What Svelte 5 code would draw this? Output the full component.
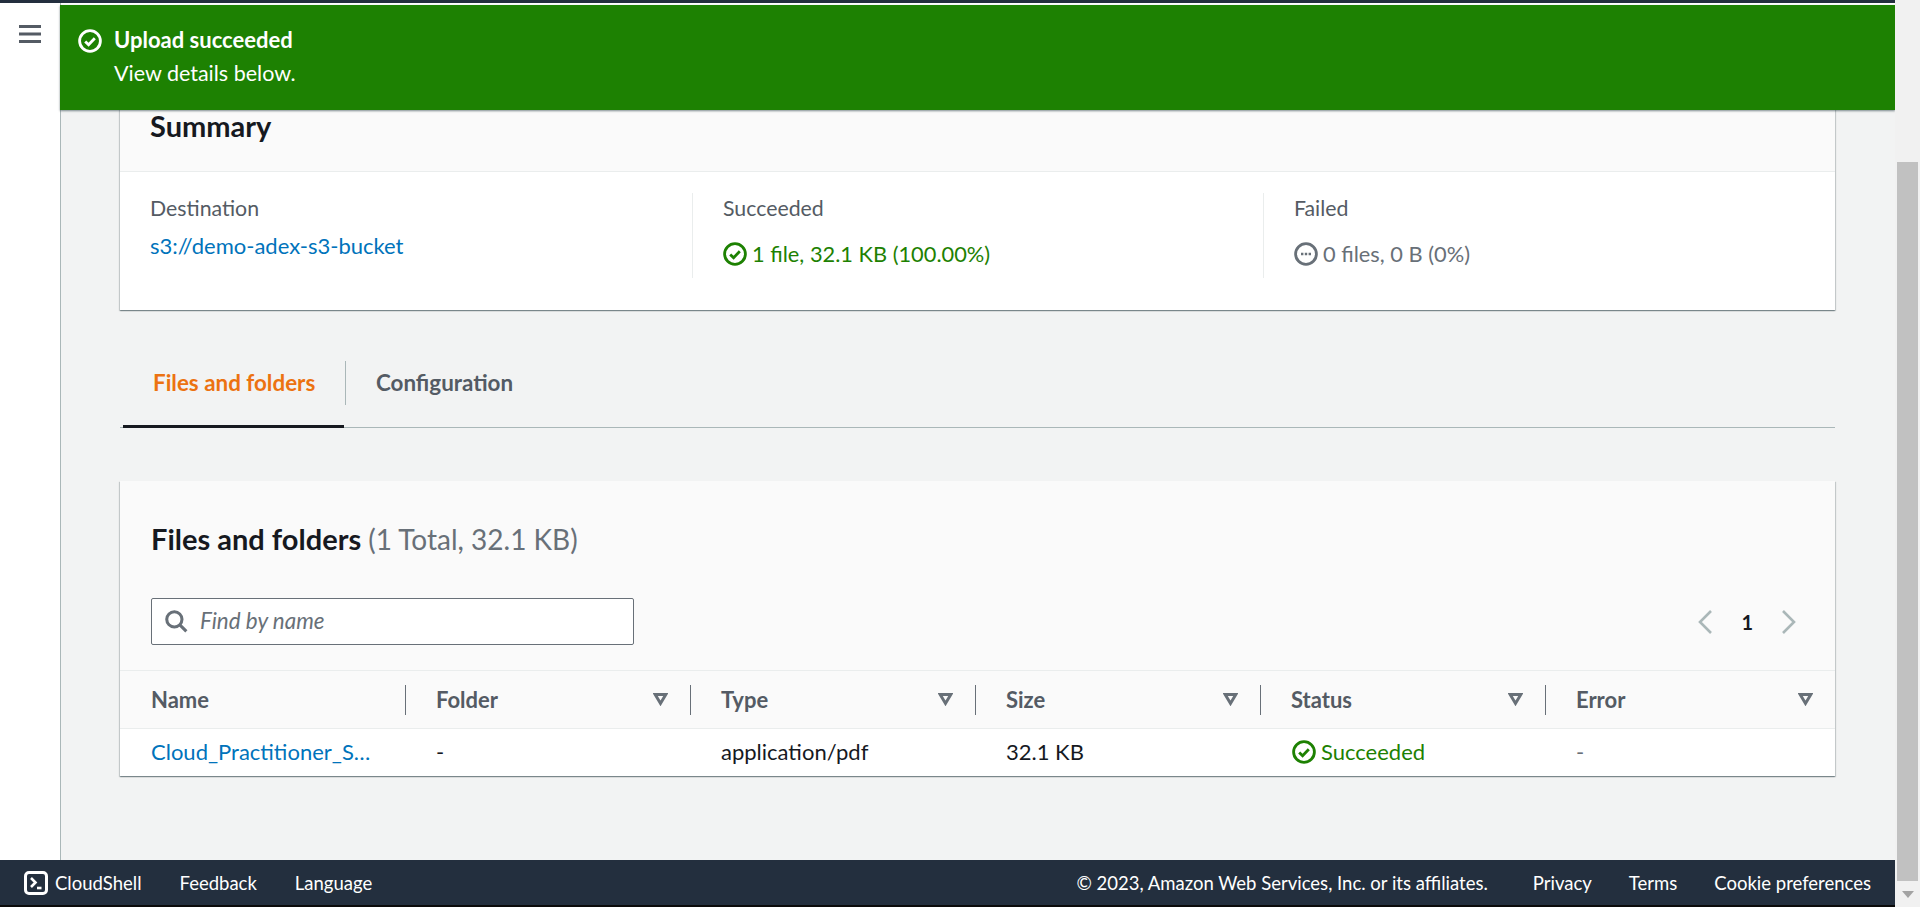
<script>
  const columns = [
    { name: 'Name', value: 'Cloud_Practitioner_S…', link: true, filter: false },
    { name: 'Folder', value: '-', filter: true },
    { name: 'Type', value: 'application/pdf', filter: true },
    { name: 'Size', value: '32.1 KB', filter: true },
    { name: 'Status', value: 'Succeeded', ok: true, filter: true },
    { name: 'Error', value: '-', muted: true, filter: true }
  ];
</script>

{#snippet check(size, cls)}
  <svg class={cls} width={size} height={size} viewBox="0 0 24 24" fill="none" stroke="currentColor" aria-hidden="true">
    <circle cx="12" cy="12" r="10.4" stroke-width="2.8" />
    <path d="M7.2 12.4l3.4 3.4 6.2-6.6" stroke-width="2.8" />
  </svg>
{/snippet}

<div class="page">
  <div class="topbar"></div>
  <div class="body">
    <aside class="side">
      <svg class="burger" width="22" height="18" viewBox="0 0 22 18" aria-hidden="true"><path d="M0 1.5h22M0 9h22M0 16.5h22" stroke="#545b64" stroke-width="3" /></svg>
    </aside>
    <main class="main">
      <div class="banner">
        {@render check(24, 'bannericon')}
        <div>
          <div class="bt">Upload succeeded</div>
          <div class="bd">View details below.</div>
        </div>
      </div>

      <section class="card summary">
        <header class="sumhead"><h2>Summary</h2></header>
        <div class="sumcols">
          <div class="sumcol">
            <div class="lbl">Destination</div>
            <a class="link dest" href="#top">s3://demo-adex-s3-bucket</a>
          </div>
          <div class="sumcol div">
            <div class="lbl">Succeeded</div>
            <div class="val ok">{@render check(24, 'vi')}<span>1 file, 32.1 KB (100.00%)</span></div>
          </div>
          <div class="sumcol div">
            <div class="lbl">Failed</div>
            <div class="val gray">
              <svg class="vi" width="24" height="24" viewBox="0 0 24 24" fill="none" stroke="currentColor" aria-hidden="true">
                <circle cx="12" cy="12" r="10.4" stroke-width="2.8" />
                <path d="M7 12h2.4M10.8 12h2.4M14.6 12h2.4" stroke-width="2.6" />
              </svg>
              <span>0 files, 0 B (0%)</span>
            </div>
          </div>
        </div>
      </section>

      <nav class="tabs">
        <div class="tab active"><span>Files and folders</span></div>
        <div class="tab"><span class="sep">Configuration</span></div>
      </nav>

      <section class="card files">
        <div class="fhead">
          <h2>Files and folders <span class="count">(1 Total, 32.1 KB)</span></h2>
          <div class="tools">
            <div class="search">
              <svg width="24" height="24" viewBox="0 0 22 22" fill="none" stroke="#687078" stroke-width="2.8" aria-hidden="true"><circle cx="9.5" cy="9.5" r="7" /><path d="M14.5 14.5l6 6" /></svg>
              <span>Find by name</span>
            </div>
            <div class="pager">
              <svg width="16" height="26" viewBox="0 0 16 26" fill="none" stroke="#aab7b8" stroke-width="2.6" aria-hidden="true"><path d="M14 2L3 13l11 11" /></svg>
              <span>1</span>
              <svg width="16" height="26" viewBox="0 0 16 26" fill="none" stroke="#aab7b8" stroke-width="2.6" aria-hidden="true"><path d="M2 2l11 11L2 24" /></svg>
            </div>
          </div>
        </div>
        <div class="table">
          {#each columns as c, i}
            <div class="th" class:first={i === 0}>
              <span>{c.name}</span>
              {#if c.filter}
                <svg width="15" height="13" viewBox="0 0 15 13" fill="none" stroke="#687078" stroke-width="3" aria-hidden="true"><path d="M2.2 1.6h10.6L7.5 10.4z" /></svg>
              {/if}
            </div>
          {/each}
          {#each columns as c}
            <div class="td" class:muted={c.muted}>
              {#if c.link}
                <a class="link" href="#top">{c.value}</a>
              {:else if c.ok}
                <span class="ok stat">{@render check(24, 'vi')}<span>{c.value}</span></span>
              {:else}
                {c.value}
              {/if}
            </div>
          {/each}
        </div>
      </section>
    </main>
    <div class="scroll">
      <div class="thumb"></div>
      <div class="arrow"></div>
    </div>
  </div>
  <footer class="footer">
    <div class="fl">
      <span class="shell">
        <svg width="24" height="24" viewBox="0 0 24 24" fill="none" stroke="#fff" aria-hidden="true">
          <rect x="1.5" y="1.5" width="21" height="21" rx="3.5" stroke-width="3" />
          <path d="M7 7l4.5 4.5L7 16" stroke-width="2.6" /><path d="M13 17h4.5" stroke-width="2.6" />
        </svg>
        CloudShell
      </span>
      <span>Feedback</span>
      <span>Language</span>
    </div>
    <div class="fr">
      <span class="copy">© 2023, Amazon Web Services, Inc. or its affiliates.</span>
      <span>Privacy</span>
      <span>Terms</span>
      <span>Cookie preferences</span>
    </div>
  </footer>
  <div class="blackline"></div>
</div>

<style>
  :global(body) {
    margin: 0;
    overflow: hidden;
    background: #fff;
  }
  .page {
    height: 907px;
    display: flex;
    flex-direction: column;
    font-family: Lato, "Open Sans", sans-serif;
    font-size: 22px;
    color: #16191f;
    position: relative;
    overflow: hidden;
  }
  .topbar {
    height: 3px;
    margin-right: 25px;
    background: #232f3e;
    flex: none;
  }
  .body {
    flex: 1;
    min-height: 0;
    display: flex;
    padding-top: 2px;
  }
  .side {
    width: 61px;
    flex: none;
    box-sizing: border-box;
    border-right: 1px solid #aab7b8;
    padding: 22px 0 0 19px;
    margin-top: -2px;
    background: #fff;
  }
  .burger { display: block; }
  .main {
    flex: 1;
    min-width: 0;
    position: relative;
    background: #f2f3f3;
    padding: 0 60px 0 59px;
    margin-top: 105px;
    overflow: visible;
  }
  .banner {
    position: absolute;
    top: -105px;
    left: -1px;
    right: 0;
    height: 105px;
    background: #1d8102;
    color: #fff;
    z-index: 2;
    box-shadow: 0 1px 2px rgba(0, 28, 36, .5);
    display: flex;
    gap: 12px;
    padding: 24px 0 0 18px;
    box-sizing: border-box;
  }
  :global(.bannericon) { flex: none; }
  .bt { font-weight: 700; line-height: 23px; margin-top: -1px; }
  .bd { font-size: 21.5px; line-height: 23px; margin-top: 11px; }
  .card {
    background: #fff;
    box-shadow: 0 1px 1px 0 rgba(0, 28, 36, .3), 1px 1px 1px 0 rgba(0, 28, 36, .15), -1px 1px 1px 0 rgba(0, 28, 36, .15);
  }
  .summary {
    margin-top: -10px;
    height: 210px;
  }
  .sumhead {
    height: 72px;
    box-sizing: border-box;
    background: #fafafa;
    border-bottom: 1px solid #eaeded;
    padding: 10px 30px 0;
  }
  h2 { margin: 0; font-weight: 700; font-size: 29px; line-height: 32px; }
  .count { font-size: 28px; font-weight: 400; color: #687078; }
  .sumcols {
    display: grid;
    grid-template-columns: 572px 571px 1fr;
    padding-top: 21px;
  }
  .sumcol {
    height: 85px;
    padding-left: 30px;
    box-sizing: border-box;
  }
  .div { border-left: 1px solid #eaeded; }
  .lbl { font-size: 21.3px; color: #545b64; line-height: 30px; }
  .val { display: flex; align-items: center; gap: 5px; margin-top: 17px; font-size: 21.8px; line-height: 28px; }
  .dest { display: block; margin-top: 8px; line-height: 30px; }
  .link { color: #0073bb; text-decoration: none; }
  .ok { color: #1d8102; }
  .gray { color: #687078; }
  .tabs {
    display: flex;
    height: 118px;
    box-sizing: border-box;
    border-bottom: 1px solid #aab7b8;
    padding-left: 3px;
  }
  .tab {
    height: 117px;
    padding-top: 51px;
    box-sizing: border-box;
    font-weight: 700;
    font-size: 22.4px;
    color: #545b64;
    line-height: 44px;
    white-space: nowrap;
  }
  .tab span { display: block; padding: 0 30px; }
  .tab.active {
    color: #ec7211;
    width: 221px;
    border-bottom: 3px solid #16191f;
    height: 118px;
  }
  .tab .sep { border-left: 1px solid #aab7b8; margin-left: 1px; }
  .files {
    margin-top: 53px;
    height: 295px;
    background: #fafafa;
  }
  .fhead { height: 190px; box-sizing: border-box; padding: 42px 30px 0 31px; border-bottom: 1px solid #eaeded; }
  .tools {
    display: flex;
    justify-content: space-between;
    align-items: center;
    margin-top: 43px;
  }
  .search {
    width: 483px;
    height: 47px;
    box-sizing: border-box;
    border: 1px solid #687078;
    border-radius: 2px;
    background: #fff;
    display: flex;
    align-items: center;
    gap: 12px;
    padding: 0 0 2px 12px;
    font-size: 22.4px;
    font-style: italic;
    color: #687078;
  }
  .pager {
    display: flex;
    align-items: center;
    gap: 28px;
    font-weight: 700;
    font-size: 20px;
    margin-right: 8px;
  }
  .table {
    display: grid;
    grid-template-columns: 285px 285px 285px 285px 285px 1fr;
  }
  .th {
    height: 57px;
    box-sizing: border-box;
    display: flex;
    align-items: center;
    justify-content: space-between;
    padding: 0 22px 0 31px;
    font-weight: 700;
    color: #545b64;
    position: relative;
  }
  .th.first { padding-left: 31px; }
  .th:not(.first)::before {
    content: "";
    position: absolute;
    left: 0;
    top: 14px;
    height: 30px;
    border-left: 1px solid #687078;
  }
  .td {
    height: 48px;
    box-sizing: border-box;
    border-top: 1px solid #eaeded;
    background: #fff;
    display: flex;
    align-items: center;
    padding: 0 0 2px 31px;
    white-space: nowrap;
  }
  .muted { color: #687078; }
  .stat { display: flex; align-items: center; gap: 5px; }
  .stat :global(.vi) { margin: 0 0 0 1px; }
  :global(.vi) { flex: none; }
  .scroll {
    width: 25px;
    flex: none;
    background: #f1f1f1;
    margin-top: -5px;
    margin-bottom: -47px;
    position: relative;
    z-index: 3;
    box-sizing: border-box;
    padding: 162px 2px 0;
  }
  .thumb { height: 719px; background: #c1c1c1; }
  .arrow {
    position: absolute;
    left: 7px;
    bottom: 9px;
    width: 0;
    height: 0;
    border-left: 6px solid transparent;
    border-right: 6px solid transparent;
    border-top: 7px solid #a3a3a3;
  }
  .footer {
    height: 45px;
    flex: none;
    margin-right: 25px;
    background: #232f3e;
    color: #fff;
    display: flex;
    align-items: center;
    justify-content: space-between;
    padding: 0 24px;
    box-sizing: border-box;
    font-size: 18.5px;
  }
  .fl, .fr { display: flex; align-items: center; gap: 37px; }
  .fl { gap: 38px; }
  .shell { display: flex; align-items: center; gap: 7px; }
  .copy { margin-right: 8px; }
  .blackline { height: 2px; flex: none; background: #0b0b0b; margin-right: 25px; }
</style>
